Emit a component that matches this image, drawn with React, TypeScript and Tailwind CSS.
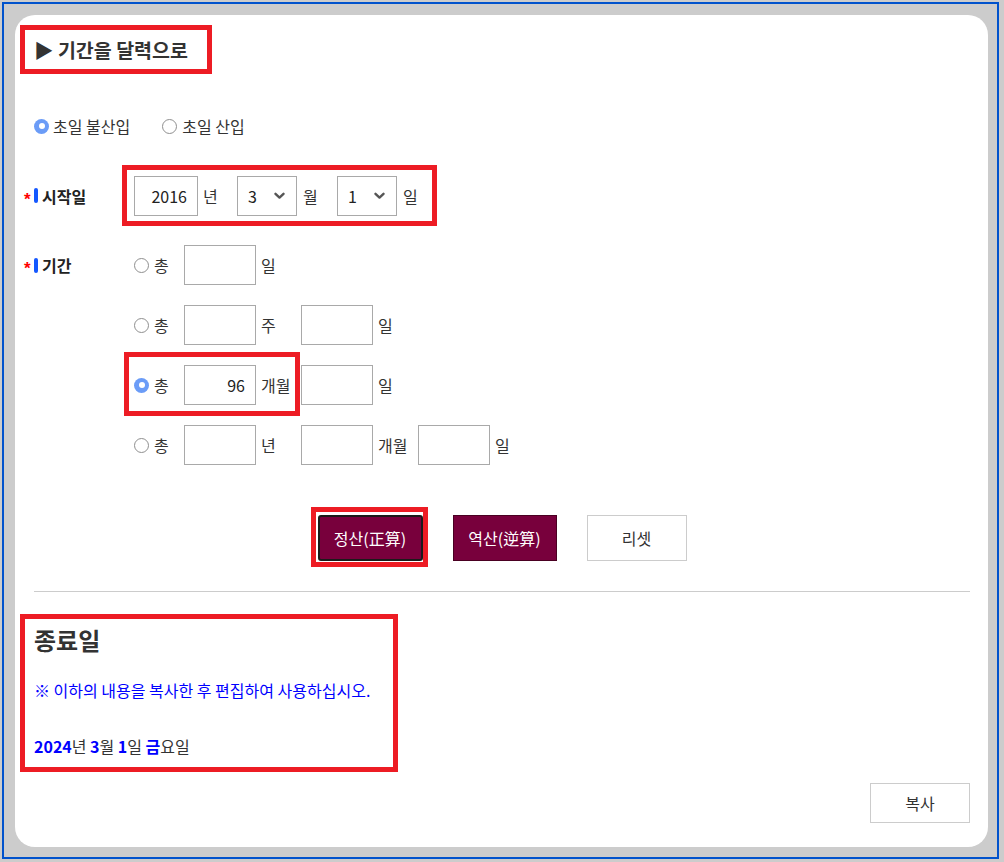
import React from "react";

const FONT = { fontFamily: '"Noto Sans CJK KR", "Noto Sans", sans-serif' };

function Radio({ checked }: { checked?: boolean }) {
  return checked ? (
    <span className="w-[15px] h-[15px] rounded-full bg-[#6b9cf7] flex items-center justify-center shrink-0">
      <span className="w-[6px] h-[6px] rounded-full bg-white" />
    </span>
  ) : (
    <span className="block w-[15px] h-[15px] rounded-full border border-[#8f8f8f] bg-white shrink-0" />
  );
}

function Chevron() {
  return (
    <svg width="11" height="8" viewBox="0 0 11 8" className="shrink-0">
      <path d="M1.5 1.8 L5.5 5.6 L9.5 1.8" fill="none" stroke="#555" strokeWidth="2.4" strokeLinecap="round" strokeLinejoin="round" />
    </svg>
  );
}

function Box({ value }: { value?: string }) {
  return (
    <div className="w-[72px] h-[40px] border border-[#a9a9a9] bg-white flex items-center justify-end pr-[10px] text-[16px] text-[#222] shrink-0">
      {value}
    </div>
  );
}

function Unit({ children }: { children: React.ReactNode }) {
  return <span className="w-[45px] pl-[5px] text-[16px] text-[#333] shrink-0 whitespace-nowrap">{children}</span>;
}

function Label({ text }: { text: string }) {
  return (
    <div className="flex items-center">
      <span className="w-[10px] text-[#ff0000] text-[17px] font-bold leading-none pt-[7px]" style={{ fontFamily: '"Liberation Sans", sans-serif' }}>*</span>
      <span className="w-[4px] h-[15px] rounded-full bg-[#1558ff]" />
      <span className="ml-[4px] text-[16px] font-bold text-[#222]">{text}</span>
    </div>
  );
}

function TotalRadio({ checked }: { checked?: boolean }) {
  return (
    <div className="w-[50px] flex items-center shrink-0">
      <Radio checked={checked} />
      <span className="ml-[5px] text-[16px] text-[#333]">총</span>
    </div>
  );
}

export default function App() {
  return (
    <div className="w-[1004px] h-[862px] bg-[#cccccc] pt-[2px] pl-[2px] pr-[5px] pb-[3px]" style={FONT}>
      <div className="h-full border-2 border-[#0052cc] pt-[11px] pl-[11px] pr-[9px] pb-[10px]">
        <div className="h-full bg-white rounded-[20px] pl-[19px] pr-[18px] flex flex-col">
          {/* Title */}
          <div className="-ml-[14px] mt-[10px] w-[192px] h-[49px] border-[5px] border-[#ed1c24] pl-[9px] flex items-center">
            <span className="text-[19.5px] font-bold text-[#333] whitespace-nowrap">▶ 기간을 달력으로</span>
          </div>

          {/* 초일 */}
          <div className="mt-[42px] h-[20px] flex items-center text-[16px] text-[#333]">
            <Radio checked />
            <span className="ml-[4px]">초일 불산입</span>
            <span className="ml-[32px] flex items-center"><Radio /></span>
            <span className="ml-[5px]">초일 산입</span>
          </div>

          {/* 시작일 */}
          <div className="mt-[29px] -ml-[10px] flex items-center">
            <div className="w-[98px]">
              <Label text="시작일" />
            </div>
            <div className="w-[315px] h-[61px] border-[5px] border-[#ed1c24] pl-[7px] flex items-center text-[16px] text-[#333]">
              <div className="w-[64px] h-[40px] border border-[#a9a9a9] flex items-center justify-end pr-[10px] text-[16px] text-[#222]">2016</div>
              <span className="ml-[5px] w-[34px]">년</span>
              <div className="w-[60px] h-[40px] border border-[#a9a9a9] flex items-center justify-between pl-[10px] pr-[11px] text-[16px] text-[#222]">
                <span>3</span>
                <Chevron />
              </div>
              <span className="ml-[6px] w-[34px]">월</span>
              <div className="w-[60px] h-[40px] border border-[#a9a9a9] flex items-center justify-between pl-[10px] pr-[11px] text-[16px] text-[#222]">
                <span>1</span>
                <Chevron />
              </div>
              <span className="ml-[6px]">일</span>
            </div>
          </div>

          {/* 기간 */}
          <div className="mt-[19px] -ml-[10px] flex items-start">
            <div className="w-[110px] h-[40px] flex items-center">
              <Label text="기간" />
            </div>
            <div className="flex flex-col gap-[20px]">
              <div className="h-[40px] flex items-center">
                <TotalRadio />
                <Box />
                <Unit>일</Unit>
              </div>
              <div className="h-[40px] flex items-center">
                <TotalRadio />
                <Box />
                <Unit>주</Unit>
                <Box />
                <Unit>일</Unit>
              </div>
              <div className="relative h-[40px] flex items-center">
                <TotalRadio checked />
                <Box value="96" />
                <Unit>개월</Unit>
                <Box />
                <Unit>일</Unit>
                <div className="absolute left-[-10px] top-[-13px] w-[176px] h-[64px] border-[5px] border-[#ed1c24] pointer-events-none" />
              </div>
              <div className="h-[40px] flex items-center">
                <TotalRadio />
                <Box />
                <Unit>년</Unit>
                <Box />
                <Unit>개월</Unit>
                <Box />
                <Unit>일</Unit>
              </div>
            </div>
          </div>

          {/* Buttons */}
          <div className="mt-[50px] flex justify-center gap-[30px]">
            <div className="relative">
              <button className="w-[105px] h-[46px] bg-[#78003c] border-2 border-[#1a1a1a] rounded-[3px] text-white text-[16px]">
                정산(正算)
              </button>
              <div className="absolute left-[-7px] top-[-8px] w-[117px] h-[60px] border-[5px] border-[#ed1c24] pointer-events-none" />
            </div>
            <button className="w-[104px] h-[46px] bg-[#78003c] border border-[#4a0022] text-white text-[16px]">
              역산(逆算)
            </button>
            <button className="w-[100px] h-[46px] bg-white border border-[#cccccc] text-[#333] text-[16px]">
              리셋
            </button>
          </div>

          <div className="mt-[30px] h-px bg-[#cccccc]" />

          {/* 종료일 */}
          <div className="-ml-[14px] mt-[22px] w-[378px] h-[158px] border-[5px] border-[#ed1c24] pl-[9px] flex flex-col">
            <div className="mt-[5px] h-[32px] leading-[32px] text-[24px] font-bold text-[#333]">종료일</div>
            <div className="mt-[24px] h-[20px] leading-[20px] text-[16px] text-[#0000ff] whitespace-nowrap">※ 이하의 내용을 복사한 후 편집하여 사용하십시오.</div>
            <div className="mt-[36px] h-[20px] leading-[20px] text-[16px] text-[#333] whitespace-nowrap">
              <b className="text-[#0000ff]">2024</b>년 <b className="text-[#0000ff]">3</b>월 <b className="text-[#0000ff]">1</b>일 <b className="text-[#0000ff]">금</b>요일
            </div>
          </div>

          <div className="mt-[11px] self-end">
            <button className="w-[100px] h-[40px] bg-white border border-[#cccccc] text-[#333] text-[16px]">복사</button>
          </div>
        </div>
      </div>
    </div>
  );
}
